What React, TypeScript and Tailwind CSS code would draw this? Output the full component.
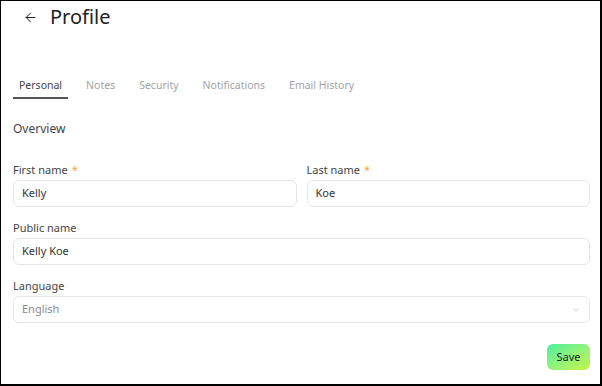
import { ArrowLeft, ChevronDown } from "lucide-react";

const tabs = ["Personal", "Notes", "Security", "Notifications", "Email History"];

const Field = (props: { label: string; value: string; required?: boolean; className?: string }) => {
  return (
    <div className={props.className}>
      <div className="h-4 text-[11px] leading-4 text-[#444]">
        {props.label}
        {props.required && <span className="ml-1 text-[#f5a33b]">*</span>}
      </div>
      <div className="mt-[2px] flex h-[27px] items-center rounded-md border border-[#e6e6e6] px-2 text-[11px] text-[#333]">
        {props.value}
      </div>
    </div>
  );
};

function App() {
  return (
    <div
      className="flex h-[386px] w-[602px] flex-col border-t border-l border-r-2 border-b-2 border-black bg-white"
      style={{ fontFamily: '"Noto Sans", "Open Sans", sans-serif' }}
    >
      <div className="flex h-7 items-center pl-[22px] pt-1">
        <ArrowLeft size={15} strokeWidth={1.6} className="text-[#222]" />
        <h1 className="ml-3 text-[20px] leading-7 text-[#222]">Profile</h1>
      </div>

      <div className="mt-[48px] flex gap-3 pl-3">
        {tabs.map((t, i) => (
          <div
            key={t}
            className={
              i === 0
                ? "border-b-2 border-[#555] px-[6px] pb-1 text-[10.5px] leading-4 text-[#444]"
                : "border-b-2 border-transparent px-[6px] pb-1 text-[10.5px] leading-4 text-[#a3a3a3]"
            }
          >
            {t}
          </div>
        ))}
      </div>

      <div className="flex flex-1 flex-col pl-3 pr-[10px]">
        <div className="mt-[22px] text-[12px] leading-4 text-[#444]">Overview</div>

        <div className="mt-[25px] flex gap-[10px]">
          <Field className="flex-1" label="First name" value="Kelly" required />
          <Field className="flex-1" label="Last name" value="Koe" required />
        </div>

        <Field className="mt-[13px]" label="Public name" value="Kelly Koe" />

        <div className="mt-[13px]">
          <div className="h-4 text-[11px] leading-4 text-[#444]">Language</div>
          <div className="mt-[2px] flex h-[27px] items-center justify-between rounded-md border border-[#e6e6e6] pl-2 pr-2 text-[11px] text-[#8a8a8a]">
            English
            <ChevronDown size={10} strokeWidth={1.5} className="text-[#aaa]" />
          </div>
        </div>

        <div className="mt-[21px] flex justify-end">
          <button className="h-[26px] w-[43px] rounded-md bg-linear-to-br from-[#45ef9d] to-[#c2f641] text-[11px] text-[#223]">
            Save
          </button>
        </div>
      </div>
    </div>
  );
}

export default App;
